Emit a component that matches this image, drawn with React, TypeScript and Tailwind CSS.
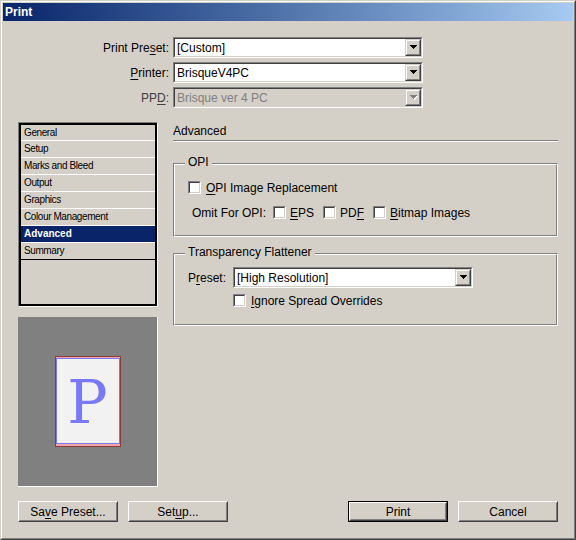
import type { ReactNode } from 'react';

const sections = [
  'General',
  'Setup',
  'Marks and Bleed',
  'Output',
  'Graphics',
  'Colour Management',
  'Advanced',
  'Summary',
];

function Key({ children }: { children: ReactNode }) {
  return <span className="underline underline-offset-[2px]">{children}</span>;
}

function Arrow({ disabled }: { disabled?: boolean }) {
  const fill = disabled ? '#808080' : '#000000';
  return (
    <svg width="8" height="5" viewBox="0 0 8 5" shapeRendering="crispEdges">
      {disabled && (
        <g fill="#ffffff">
          <rect x="1" y="1" width="7" height="1" />
          <rect x="2" y="2" width="5" height="1" />
          <rect x="3" y="3" width="3" height="1" />
          <rect x="4" y="4" width="1" height="1" />
        </g>
      )}
      <g fill={fill}>
        <rect x="0" y="0" width="7" height="1" />
        <rect x="1" y="1" width="5" height="1" />
        <rect x="2" y="2" width="3" height="1" />
        <rect x="3" y="3" width="1" height="1" />
      </g>
    </svg>
  );
}

function Combo({ value, className, disabled }: { value: string; className: string; disabled?: boolean }) {
  return (
    <div
      className={`flex h-[21px] border border-t-[#808080] border-l-[#808080] border-b-white border-r-white ${className}`}
    >
      <div className="flex flex-1 border border-t-[#404040] border-l-[#404040] border-b-[#d4d0c8] border-r-[#d4d0c8]">
        <div
          className={`flex flex-1 items-center px-[2px] ${disabled ? 'bg-[#d4d0c8] text-[#808080]' : 'bg-white text-black'}`}
        >
          {value}
        </div>
        <div className="w-[16px] h-full border border-t-[#d4d0c8] border-l-[#d4d0c8] border-b-[#404040] border-r-[#404040]">
          <div className="flex h-full items-center justify-center border border-t-white border-l-white border-b-[#808080] border-r-[#808080] bg-[#d4d0c8] pl-[1px]">
            <Arrow disabled={disabled} />
          </div>
        </div>
      </div>
    </div>
  );
}

function Check() {
  return (
    <span className="w-[13px] h-[13px] shrink-0 border border-t-[#808080] border-l-[#808080] border-b-white border-r-white">
      <span className="block w-full h-full border border-t-[#404040] border-l-[#404040] border-b-[#d4d0c8] border-r-[#d4d0c8] bg-white" />
    </span>
  );
}

function Group({ title, className, children }: { title: string; className: string; children: ReactNode }) {
  return (
    <div
      className={`relative border border-t-[#808080] border-l-[#808080] border-b-white border-r-white ${className}`}
    >
      <div className="h-full border border-t-white border-l-white border-b-[#808080] border-r-[#808080]">
        {children}
      </div>
      <span className="absolute top-[-9px] left-[11px] px-[3px] bg-[#d4d0c8]">{title}</span>
    </div>
  );
}

function Button({ children, isDefault }: { children: ReactNode; isDefault?: boolean }) {
  const face = (
    <div className="h-full border border-t-white border-l-white border-b-[#404040] border-r-[#404040]">
      <div className="flex h-full items-center justify-center border border-t-[#d4d0c8] border-l-[#d4d0c8] border-b-[#808080] border-r-[#808080]">
        {children}
      </div>
    </div>
  );
  if (isDefault) {
    return <div className="w-[100px] h-[21px] border border-black">{face}</div>;
  }
  return <div className="w-[100px] h-[21px]">{face}</div>;
}

export default function App() {
  return (
    <div className="w-[576px] h-[540px] bg-[#d4d0c8] font-['Liberation_Sans',Arial,sans-serif] text-[12px] leading-[14px] text-black border border-t-[#d4d0c8] border-l-[#d4d0c8] border-b-[#404040] border-r-[#404040]">
      <div className="flex h-full flex-col border border-t-white border-l-white border-b-[#808080] border-r-[#808080] p-[1px]">
        <div className="h-[18px] bg-linear-to-r from-[#0a246a] to-[#a6caf0] pl-[2px] font-bold leading-[18px] text-white">
          Print
        </div>

        <div className="flex flex-col px-[15px] pt-[16px]">
          <div className="flex flex-col gap-[4px]">
            <div className="flex h-[21px] items-center">
              <span className="w-[155px] pr-[4px] text-right">
                Print Pre<Key>s</Key>et:
              </span>
              <Combo value="[Custom]" className="w-[250px]" />
            </div>
            <div className="flex h-[21px] items-center">
              <span className="w-[155px] pr-[4px] text-right">
                <Key>P</Key>rinter:
              </span>
              <Combo value="BrisqueV4PC" className="w-[250px]" />
            </div>
            <div className="flex h-[21px] items-center">
              <span className="w-[155px] pr-[4px] text-right text-[#404040]">
                PP<Key>D</Key>:
              </span>
              <Combo value="Brisque ver 4 PC" className="w-[250px]" disabled />
            </div>
          </div>

          <div className="mt-[14px] flex gap-[15px]">
            <div className="flex w-[140px] flex-col">
              <div className="h-[185px] border border-t-[#808080] border-l-[#808080] border-b-white border-r-white">
                <div className="flex h-full flex-col border-2 border-black">
                  {sections.map((s, i) => {
                    const selected = s === 'Advanced';
                    const last = i === sections.length - 1;
                    return (
                      <div
                        key={s}
                        className={`${i === 0 ? 'h-[16px] leading-[15px]' : 'h-[17px] leading-[16px]'} border-b pl-[3px] text-[10px] ${
                          last ? 'border-black' : 'border-white'
                        } ${selected ? 'bg-[#0a246a] font-bold text-white' : 'tracking-[-0.4px]'}`}
                      >
                        {s}
                      </div>
                    );
                  })}
                </div>
              </div>

              <div className="mt-[10px] flex h-[170px] items-center justify-center border-r border-b border-white bg-[#808080]">
                <div className="flex h-[91px] w-[66px] flex-col border border-[#8c3a3a] bg-[#f0a8a8] pt-[1px] pb-[2px]">
                  <div className="flex flex-1 items-center justify-center border border-[#7878ff] bg-[#f2f2f2]">
                    <span className="mt-[2px] font-['DejaVu_Serif',serif] text-[60px] leading-none text-[#7878f8]">
                      P
                    </span>
                  </div>
                </div>
              </div>
            </div>

            <div className="flex flex-1 flex-col">
              <div className="h-[18px] pt-[2px]">Advanced</div>
              <div className="h-[1px] bg-[#808080]" />
              <div className="h-[1px] bg-white" />

              <Group title="OPI" className="mt-[21px] h-[74px]">
                <div className="flex flex-col pt-[16px]">
                  <div className="flex h-[13px] items-center gap-[5px] pl-[13px]">
                    <Check />
                    <span>
                      <Key>O</Key>PI Image Replacement
                    </span>
                  </div>
                  <div className="mt-[12px] flex h-[13px] items-center pl-[17px]">
                    <span>Omit For OPI:</span>
                    <span className="ml-[7px] flex items-center gap-[4px]">
                      <Check />
                      <span>
                        <Key>E</Key>PS
                      </span>
                    </span>
                    <span className="ml-[9px] flex items-center gap-[4px]">
                      <Check />
                      <span>
                        PD<Key>F</Key>
                      </span>
                    </span>
                    <span className="ml-[9px] flex items-center gap-[4px]">
                      <Check />
                      <span>
                        <Key>B</Key>itmap Images
                      </span>
                    </span>
                  </div>
                </div>
              </Group>

              <Group title="Transparency Flattener" className="mt-[16px] h-[73px]">
                <div className="flex flex-col pt-[12px]">
                  <div className="flex items-center pl-[13px]">
                    <span className="w-[45px]">
                      P<Key>r</Key>eset:
                    </span>
                    <Combo value="[High Resolution]" className="w-[240px]" />
                  </div>
                  <div className="mt-[6px] flex h-[13px] items-center gap-[5px] pl-[58px]">
                    <Check />
                    <span>
                      <Key>I</Key>gnore Spread Overrides
                    </span>
                  </div>
                </div>
              </Group>
            </div>
          </div>

          <div className="mt-[14px] flex justify-between">
            <div className="flex gap-[10px]">
              <Button>
                <span>
                  Sa<Key>v</Key>e Preset...
                </span>
              </Button>
              <Button>
                <span>
                  Set<Key>u</Key>p...
                </span>
              </Button>
            </div>
            <div className="flex gap-[10px]">
              <Button isDefault>Print</Button>
              <Button>Cancel</Button>
            </div>
          </div>
        </div>
      </div>
    </div>
  );
}
